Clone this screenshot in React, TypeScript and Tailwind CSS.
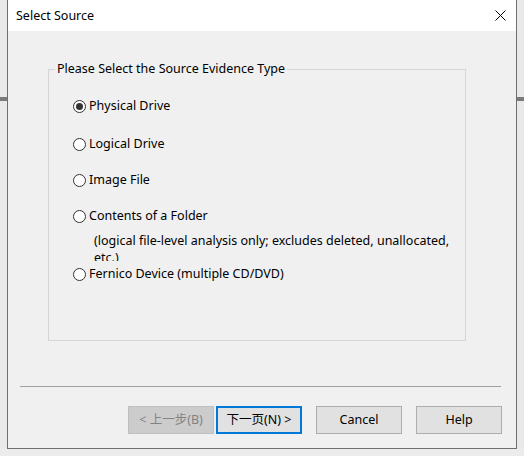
const font = { fontFamily: '"Noto Sans", "Noto Sans CJK SC", sans-serif' }

function Radio({ label, checked }: { label: string; checked?: boolean }) {
  return (
    <div className="flex h-[16px] items-center">
      <span className="flex h-[13px] w-[13px] items-center justify-center rounded-full border border-[#333333] bg-white">
        {checked && <span className="h-[7px] w-[7px] rounded-full bg-[#333333]" />}
      </span>
      <span className="ml-[3px] text-[12.5px] text-black">{label}</span>
    </div>
  )
}

function Btn({ children, kind }: { children: React.ReactNode; kind?: 'disabled' | 'default' }) {
  let cls = 'border border-[#adadad] bg-[#e1e1e1] text-black'
  if (kind === 'disabled') cls = 'border border-[#bfbfbf] bg-[#cccccc] text-[#838383]'
  if (kind === 'default') cls = 'border-2 border-[#0078d7] bg-[#e1e1e1] text-black'
  return (
    <div className={`flex h-[28px] w-[86px] items-center justify-center text-[12.5px] ${cls}`}>{children}</div>
  )
}

export default function App() {
  return (
    <div className="flex h-[456px] w-[524px] flex-col bg-[#e9e9e9] leading-[16px]" style={font}>
      <div className="flex h-[449px]">
        {/* left strip */}
        <div className="w-[7px] pt-[97px]">
          <div className="h-[4px] bg-[#7a7a7a]" />
        </div>

        {/* dialog */}
        <div className="flex w-[510px] flex-col border-x border-b border-[#6f6f6f] bg-[#f0f0f0]">
          <div className="flex h-[31px] items-center justify-between bg-white pl-[8px] pr-[10px]">
            <span className="text-[12.5px] text-black">Select Source</span>
            <svg width="11" height="11" viewBox="0 0 11 11">
              <path d="M0.5 0.5 L10.5 10.5 M10.5 0.5 L0.5 10.5" stroke="#000" strokeWidth="1" />
            </svg>
          </div>

          <div className="flex flex-1 flex-col">
            <fieldset className="ml-[40px] mt-[30px] h-[280px] w-[418px] border border-[#d5d5d5] pl-[6px]">
              <legend className="px-[2px] text-[12.5px] text-black">Please Select the Source Evidence Type</legend>
              <div className="ml-[18px] flex flex-col">
                <div className="mt-[21px]">
                  <Radio label="Physical Drive" checked />
                </div>
                <div className="mt-[22px]">
                  <Radio label="Logical Drive" />
                </div>
                <div className="mt-[20px]">
                  <Radio label="Image File" />
                </div>
                <div className="mt-[20px]">
                  <Radio label="Contents of a Folder" />
                </div>
                <div className="ml-[21px] mt-[8px] h-[29px] overflow-hidden text-[12.5px] leading-[17px] text-black">
                  (logical file-level analysis only; excludes deleted, unallocated,
                  <br />
                  etc.)
                </div>
                <div className="mt-[5px]">
                  <Radio label="Fernico Device (multiple CD/DVD)" />
                </div>
              </div>
            </fieldset>

            <div className="ml-[12px] mr-[15px] mt-[45px] h-px bg-[#a0a0a0]" />

            <div className="mr-[14px] mt-[19px] flex justify-end">
              <Btn kind="disabled">&lt; 上一步(B)</Btn>
              <div className="ml-[2px]">
                <Btn kind="default">下一页(N) &gt;</Btn>
              </div>
              <div className="ml-[14px]">
                <Btn>Cancel</Btn>
              </div>
              <div className="ml-[14px]">
                <Btn>Help</Btn>
              </div>
            </div>
          </div>
        </div>

        {/* right strip */}
        <div className="w-[7px] pt-[97px]">
          <div className="h-[4px] bg-[#7a7a7a]" />
        </div>
      </div>
      <div className="flex-1 bg-[#ececec]" />
    </div>
  )
}
